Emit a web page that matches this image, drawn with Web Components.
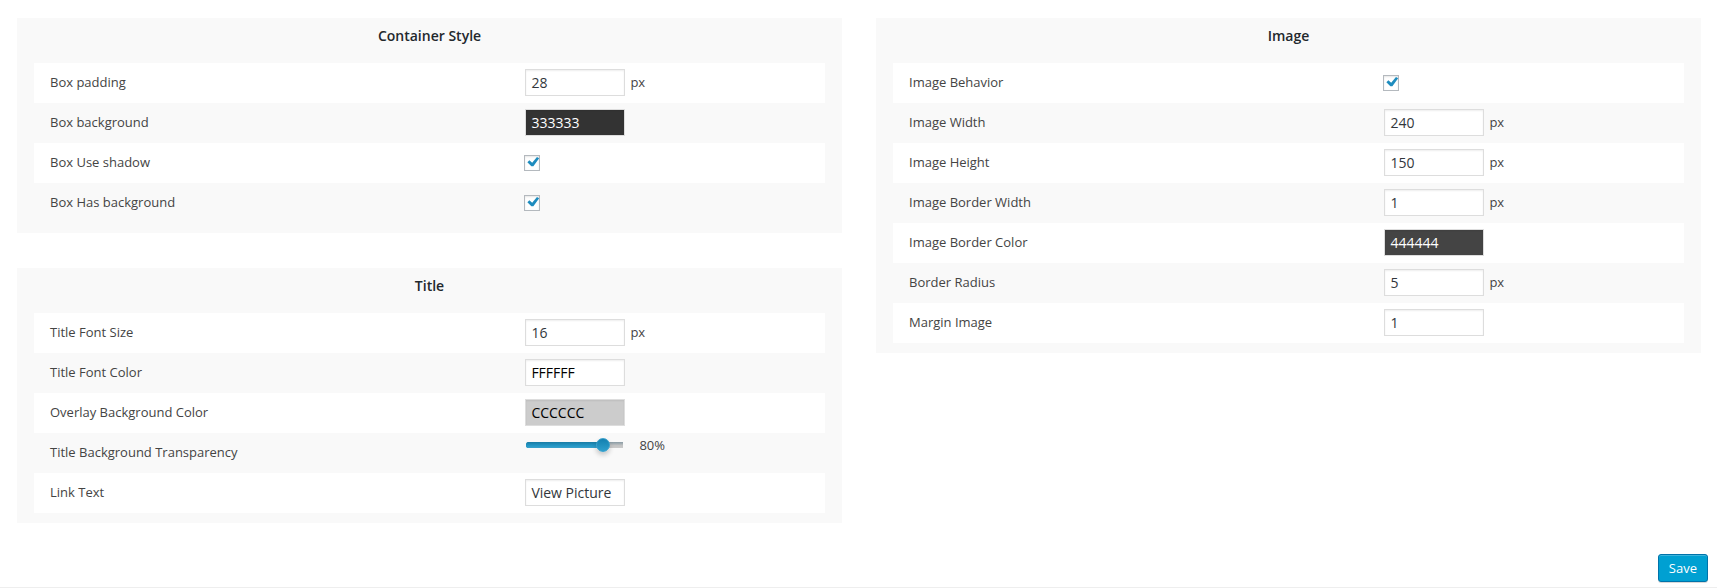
<!DOCTYPE html>
<html lang="en">
<head>
<meta charset="utf-8">
<meta name="viewport" content="width=device-width, initial-scale=1">
<title>Gallery options</title>
<style>
  body { margin: 0; background: #fff; color: #444; font: 13px/20px "Open Sans", "Noto Sans", sans-serif; }
</style>
</head>
<body>
<options-page>
  <option-panel slot="left" heading="Container Style">
    <option-row label="Box padding" value="28" unit="px"></option-row>
    <option-row label="Box background" value="333333" type="color"></option-row>
    <option-row label="Box Use shadow" type="checkbox"></option-row>
    <option-row label="Box Has background" type="checkbox"></option-row>
  </option-panel>
  <option-panel slot="left" heading="Title">
    <option-row label="Title Font Size" value="16" unit="px"></option-row>
    <option-row label="Title Font Color" value="FFFFFF" type="color"></option-row>
    <option-row label="Overlay Background Color" value="CCCCCC" type="color"></option-row>
    <option-row label="Title Background Transparency" value="80" type="range"></option-row>
    <option-row label="Link Text" value="View Picture"></option-row>
  </option-panel>
  <option-panel slot="right" heading="Image">
    <option-row label="Image Behavior" type="checkbox"></option-row>
    <option-row label="Image Width" value="240" unit="px"></option-row>
    <option-row label="Image Height" value="150" unit="px"></option-row>
    <option-row label="Image Border Width" value="1" unit="px"></option-row>
    <option-row label="Image Border Color" value="444444" type="color"></option-row>
    <option-row label="Border Radius" value="5" unit="px"></option-row>
    <option-row label="Margin Image" value="1"></option-row>
  </option-panel>
  <save-button slot="actions">Save</save-button>
</options-page>

<script>
customElements.define('options-page', class extends HTMLElement {
  constructor() {
    super();
    this.attachShadow({ mode: 'open' }).innerHTML = `
      <style>
        :host { display: block; border-bottom: 1px solid #eee; }
        main { display: grid; grid-template-columns: 1fr 1fr; gap: 34px; align-items: start; padding: 18px 16px 31px 17px; }
        .column { display: grid; gap: 35px; }
        footer { display: flex; justify-content: flex-end; padding: 0 9px 5px; }
      </style>
      <main>
        <div class="column"><slot name="left"></slot></div>
        <div class="column"><slot name="right"></slot></div>
      </main>
      <footer><slot name="actions"></slot></footer>`;
  }
});

customElements.define('option-panel', class extends HTMLElement {
  constructor() {
    super();
    this.attachShadow({ mode: 'open' }).innerHTML = `
      <style>
        :host { display: block; background: #f9f9f9; padding: 0 17px 10px; }
        h3 { margin: 0; padding: 8px 0 17px; font-size: 14px; line-height: 20px; font-weight: 600; color: #23282d; text-align: center; }
      </style>
      <h3></h3>
      <slot></slot>`;
  }
  connectedCallback() {
    this.shadowRoot.querySelector('h3').textContent = this.getAttribute('heading');
  }
});

customElements.define('option-row', class extends HTMLElement {
  constructor() {
    super();
    this.attachShadow({ mode: 'open' }).innerHTML = `
      <style>
        :host { display: grid; grid-template-columns: 5fr 3fr; align-items: center; min-height: 40px; padding: 0 16px 2px; box-sizing: border-box; }
        :host(:nth-child(odd)) { background: #fff; }
        .control { display: flex; align-items: center; gap: 4px; }
        input { box-sizing: border-box; font: inherit; color: #32373c; }
        input[type=text] {
          width: 100px; height: 27px; margin: 0 1px; padding: 0 5px; font-size: 14px;
          border: 1px solid #ddd; border-radius: 0; background: #fff;
          box-shadow: inset 0 1px 2px rgba(0,0,0,.07);
        }
        input[type=checkbox] {
          appearance: none; width: 16px; height: 16px; margin: 1px 0 0;
          border: 1px solid #b4b9be; background: #fff;
          box-shadow: inset 0 1px 2px rgba(0,0,0,.1);
        }
        input[type=checkbox]:checked::before {
          content: ""; display: block; width: 20px; height: 20px; margin: -3px 0 0 -3px;
          background: #1e8cbe;
          clip-path: path("M14.6 4.6L16.8 5.8L11 13.8H9L5 9.7L7 7.8L9.8 10.2z");
        }
        :host([type=range]) .control { align-self: start; gap: 13px; padding-top: 2px; }
        input[type=range] { appearance: none; width: 100px; height: 20px; margin: 0 0 0 2px; background: none; }
        input[type=range]::-webkit-slider-runnable-track {
          box-sizing: border-box; height: 6px; border-right: 3px solid transparent; border-radius: 3px 6px 6px 3px;
          background:
            linear-gradient(rgba(0,60,90,.3), rgba(0,60,90,0) 60%, rgba(255,255,255,.1)) padding-box,
            linear-gradient(to right, #2397c5 78%, #c4c4c4 78%) padding-box;
        }
        input[type=range]::-webkit-slider-thumb {
          appearance: none; box-sizing: border-box; width: 14px; height: 14px; margin: -4px 0 0 3px;
          border: 1px solid #3aa0cb; border-radius: 50%;
          background: linear-gradient(#1380b0, #2e9fcc);
          box-shadow: 0 3px 5px rgba(0,0,0,.2);
        }
      </style>
      <label for="field"></label>
      <div class="control"><input id="field"></div>`;
  }
  connectedCallback() {
    const type = this.getAttribute('type') || 'text';
    const value = this.getAttribute('value') || '';
    const input = this.shadowRoot.querySelector('input');
    this.shadowRoot.querySelector('label').textContent = this.getAttribute('label');
    input.type = type === 'color' ? 'text' : type;
    if (type === 'checkbox') { input.checked = true; return; }
    input.value = value;
    if (type === 'color') {
      // Pick black or white lettering from the brightness of the swatch.
      const paint = () => {
        const n = parseInt(input.value, 16);
        if (!/^[0-9a-f]{6}$/i.test(input.value)) return;
        const light = ((n >> 16) + (n >> 8 & 255) + (n & 255)) / 3 > 127;
        input.style.backgroundColor = '#' + input.value;
        input.style.color = light ? '#000' : '#fff';
      };
      input.addEventListener('input', paint);
      paint();
    }
    const unit = this.getAttribute('unit');
    if (unit || type === 'range') {
      const note = document.createElement('span');
      note.textContent = unit || value + '%';
      if (!unit) input.addEventListener('input', () => { note.textContent = input.value + '%'; });
      input.after(note);
    }
  }
});

customElements.define('save-button', class extends HTMLElement {
  constructor() {
    super();
    this.attachShadow({ mode: 'open' }).innerHTML = `
      <style>
        :host { display: block; }
        button {
          display: block; box-sizing: border-box; height: 28px; padding: 0 10px; font: inherit; line-height: 26px;
          color: #fff; background: #00a0d2; border: 1px solid #0073aa; border-radius: 3px; cursor: pointer;
          box-shadow: inset 0 1px 0 rgba(120,200,230,.5), 0 1px 0 rgba(0,0,0,.15);
        }
      </style>
      <button type="button"><slot></slot></button>`;
  }
});
</script>
</body>
</html>
